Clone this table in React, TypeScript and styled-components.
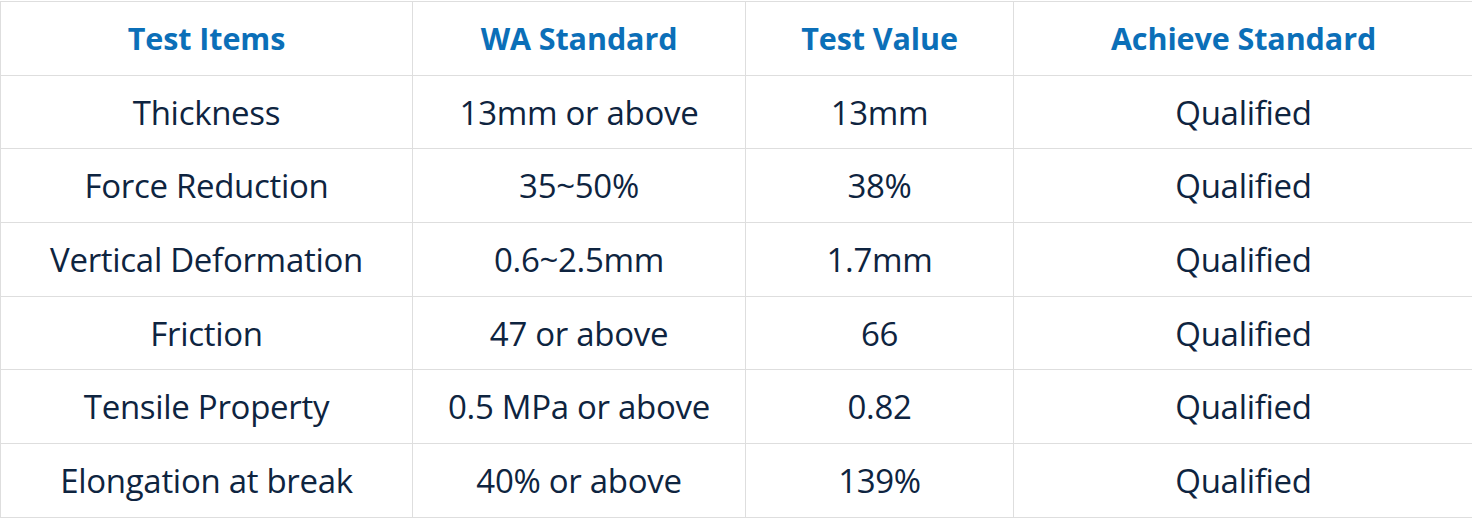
import React from "react";
import styled, { createGlobalStyle } from "styled-components";

const Global = createGlobalStyle`
  html, body { margin: 0; padding: 0; background: #ffffff; }
  body { font-family: "Open Sans", "Noto Sans", sans-serif; }
`;

const Page = styled.div`
  padding-top: 1px;
  width: 1469px;
`;

const Table = styled.table`
  width: 1469px;
  border-collapse: collapse;
  table-layout: fixed;
  border: 1px solid #dedede;
`;

const HeadCell = styled.th<{ $w: number }>`
  width: ${(p) => p.$w}px;
  height: 72.7px;
  padding: 0;
  border: 1px solid #dedede;
  text-align: center;
  vertical-align: middle;
  color: #0b6fb8;
  font-weight: 700;
  font-size: 30.5px;
  letter-spacing: -0.1px;
`;

const Cell = styled.td`
  height: 72.7px;
  padding: 0;
  border: 1px solid #dedede;
  text-align: center;
  vertical-align: middle;
  color: #0e2440;
  font-weight: 400;
  font-size: 33px;
  letter-spacing: -0.3px;
`;

const columns = [
  { label: "Test Items", w: 411 },
  { label: "WA Standard", w: 332 },
  { label: "Test Value", w: 267 },
  { label: "Achieve Standard", w: 459 },
];

const rows = [
  ["Thickness", "13mm or above", "13mm", "Qualified"],
  ["Force Reduction", "35~50%", "38%", "Qualified"],
  ["Vertical Deformation", "0.6~2.5mm", "1.7mm", "Qualified"],
  ["Friction", "47 or above", "66", "Qualified"],
  ["Tensile Property", "0.5 MPa or above", "0.82", "Qualified"],
  ["Elongation at break", "40% or above", "139%", "Qualified"],
];

export default function App() {
  return (
    <Page>
      <Global />
      <Table>
        <thead>
          <tr>
            {columns.map((c) => (
              <HeadCell key={c.label} $w={c.w}>
                {c.label}
              </HeadCell>
            ))}
          </tr>
        </thead>
        <tbody>
          {rows.map((r) => (
            <tr key={r[0]}>
              {r.map((v, i) => (
                <Cell key={i}>{v}</Cell>
              ))}
            </tr>
          ))}
        </tbody>
      </Table>
    </Page>
  );
}
